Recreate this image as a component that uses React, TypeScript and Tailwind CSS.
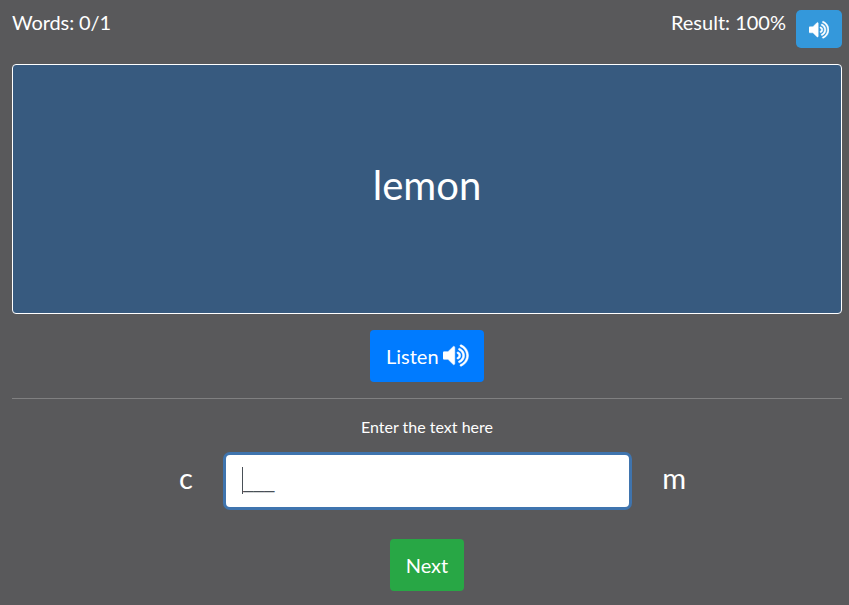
import React from "react";

function SpeakerIcon({ className }: { className: string }) {
  return (
    <svg viewBox="64 0 1664 1792" preserveAspectRatio="none" fill="currentColor" stroke="currentColor" strokeWidth="35" aria-hidden="true" className={className}>
      <path d="M832 352v1088q0 26-19 45t-45 19-45-19l-333-333h-262q-26 0-45-19t-19-45v-384q0-26 19-45t45-19h262l333-333q19-19 45-19t45 19 19 45zm384 544q0 76-42.5 141.5t-112.5 93.5q-10 5-25 5-26 0-45-18.5t-19-45.5q0-21 12-35.5t29-25 34-23 29-36 12-56.5-12-56.5-29-36-34-23-29-25-12-35.5q0-27 19-45.5t45-18.5q15 0 25 5 70 27 112.5 93t42.5 142zm256 0q0 153-85 282.5t-225 188.5q-13 5-25 5-27 0-46-19t-19-45q0-39 39-59 56-29 76-44 74-54 115.5-135.5t41.5-173.5-41.5-173.5-115.5-135.5q-20-15-76-44-39-20-39-59 0-26 19-45t45-19q13 0 26 5 140 59 225 188.5t85 282.5zm256 0q0 230-127 422.5t-338 283.5q-13 5-26 5-26 0-45-19t-19-45q0-36 39-59 7-4 22.5-10.5t22.5-10.5q46-25 82-51 123-91 192-227t69-289-69-289-192-227q-36-26-82-51-7-4-22.5-10.5t-22.5-10.5q-39-23-39-59 0-26 19-45t45-19q13 0 26 5 211 91 338 283.5t127 422.5z" />
    </svg>
  );
}

export default function App() {
  return (
    <main className="h-[605px] w-[849px] overflow-hidden bg-[#59595b] pl-3 pr-[7px] pt-[10px] font-['Lato',sans-serif] text-white">
      <header className="flex h-[38px] items-start justify-between text-[20px] leading-[24px]">
        <span className="tracking-[-0.1px]">Words: 0/1</span>
        <div className="flex">
          <span className="mr-[10px]">Result: 100%</span>
          <button aria-label="Sound" className="flex h-[38px] w-[46px] items-center justify-center rounded-[5px] bg-[#3498db]">
            <SpeakerIcon className="mt-px h-[21.5px] w-[20px]" />
          </button>
        </div>
      </header>
      <section className="mt-4 flex h-[250px] items-center justify-center rounded-[4px] border border-white bg-[#375a7f] text-[40px] leading-[48px]">
        <span className="-mt-2">lemon</span>
      </section>
      <button className="mx-auto mt-4 flex h-[52px] w-[114px] items-center rounded-[4px] bg-[#007bff] pl-4 text-[20px]">
        <span className="w-[57px] text-left">Listen</span>
        <SpeakerIcon className="-mt-[2px] h-[27px] w-[25.5px] shrink-0" />
      </button>
      <hr className="mt-4 border-[#808081]" />
      <label htmlFor="answer" className="mt-4 block text-center text-[16px] leading-6">Enter the text here</label>
      <div className="mt-[13px] flex h-[58px] pl-[167px] text-[29px] leading-[51px]">
        <span className="w-[44px]">c</span>
        <div className="h-[58px] w-[409px] rounded-[7px] border-[3px] border-[#3f74ae] bg-white px-4 text-[24px] text-[#495057]">
          <span className="mt-[12px] flex h-[27px] items-center border-l border-[#495057] font-['Open_Sans',sans-serif] leading-[27px]"><span className="-mt-[2px]">___</span></span>
        </div>
        <span className="w-[54px] text-right">m</span>
      </div>
      <button className="mx-auto mt-[29px] flex h-[52px] w-[74px] items-center justify-center rounded-[4px] bg-[#28a745] text-[20px]">Next</button>
    </main>
  );
}
